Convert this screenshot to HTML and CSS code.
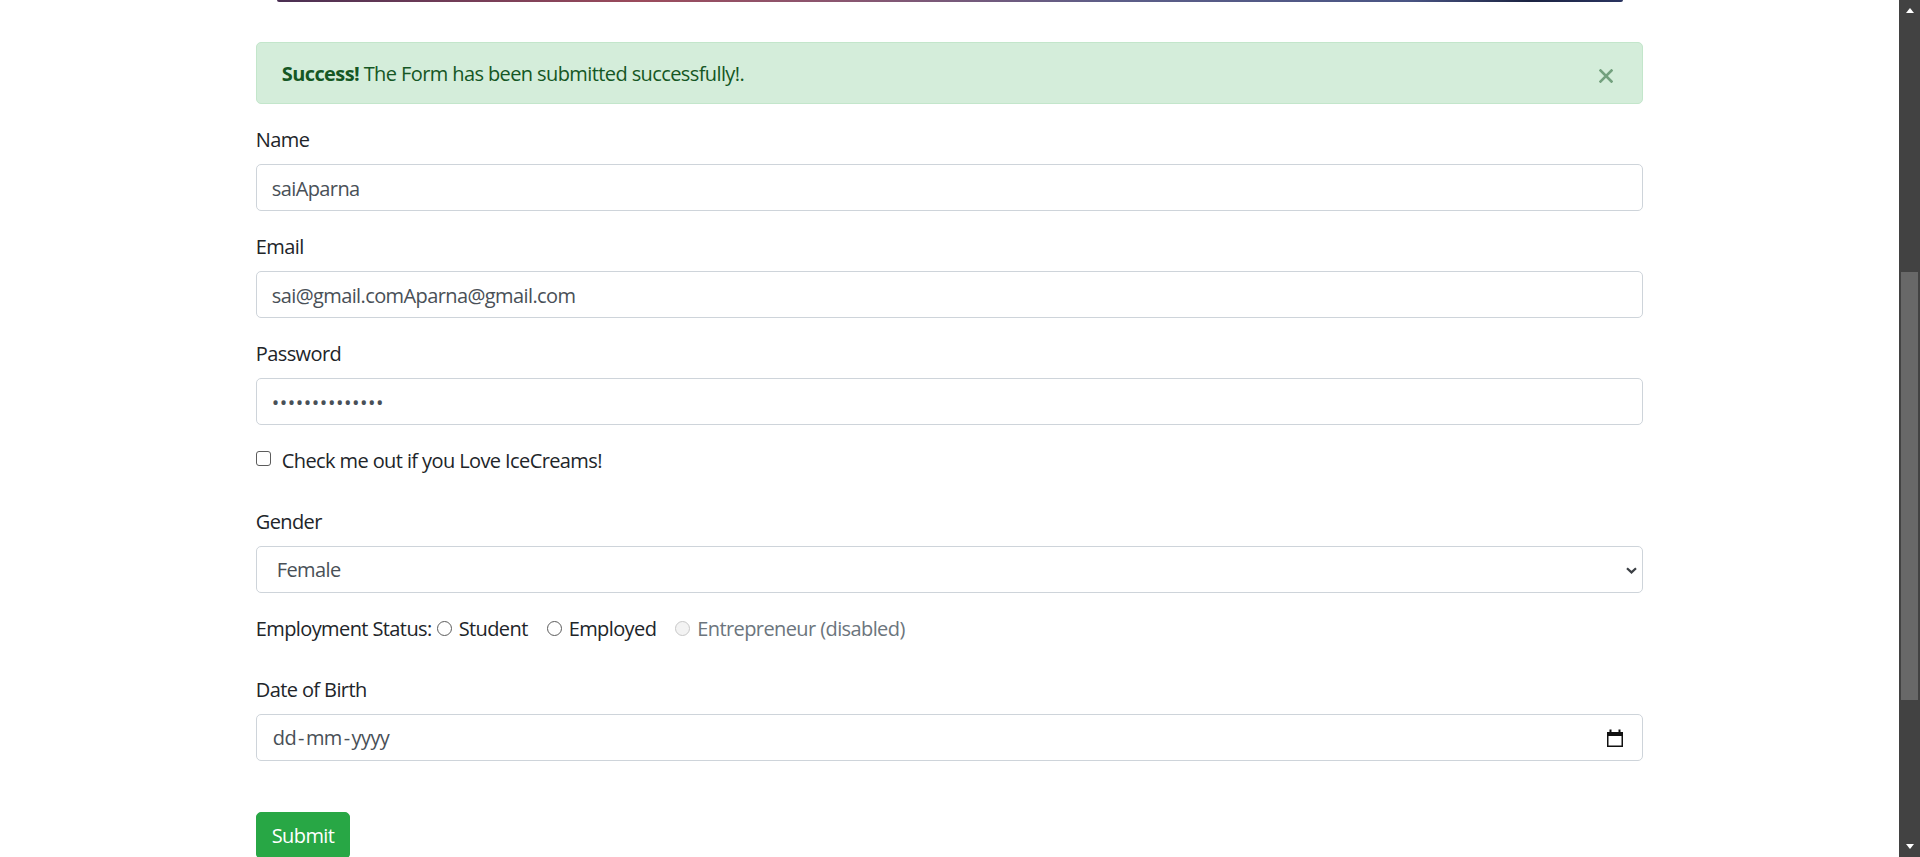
FILE: index.html
```html
<!DOCTYPE html>
<html lang="en">
<head>
<meta charset="utf-8">
<title>Form</title>
<link rel="stylesheet" href="styles.css">
</head>
<body>
<div class="page">
  <main class="main">
    <div class="container">
      <div class="banner"></div>
      <div class="alert">
        <span class="alert-text"><strong>Success!</strong> The Form has been submitted successfully!.</span>
        <svg class="close" width="14" height="14" viewBox="0 0 14 14"><path d="M1.5 1.5 L12.5 12.5 M12.5 1.5 L1.5 12.5" stroke="#155724" stroke-width="2.6" stroke-linecap="square"/></svg>
      </div>
      <form class="form">
        <div class="form-group">
          <label class="label">Name</label>
          <input class="form-control" type="text" value="saiAparna">
        </div>
        <div class="form-group">
          <label class="label">Email</label>
          <input class="form-control" type="text" value="sai@gmail.comAparna@gmail.com">
        </div>
        <div class="form-group">
          <label class="label">Password</label>
          <input class="form-control password" type="password" value="abcdefghijklmn">
        </div>
        <div class="form-check"><span class="checkbox"></span><span>Check me out if you Love IceCreams!</span></div>
        <div class="form-group">
          <label class="label">Gender</label>
          <div class="form-control select"><span>Female</span><svg width="11" height="7" viewBox="0 0 11 7"><path d="M1 1.2 L5.5 5.4 L10 1.2" fill="none" stroke="#3b3f44" stroke-width="2.2"/></svg></div>
        </div>
        <div class="radio-row"><span>Employment Status:</span><span class="radio"></span><span class="opt">Student</span><span class="radio"></span><span class="opt">Employed</span><span class="radio disabled"></span><span class="muted">Entrepreneur (disabled)</span></div>
        <div class="form-group dob">
          <label class="label">Date of Birth</label>
          <div class="form-control date"><span>dd<span class="sep">-</span>mm<span class="sep">-</span>yyyy</span><svg width="16" height="18" viewBox="0 0 16 18"><rect x="0.75" y="3.75" width="14.5" height="13.5" fill="none" stroke="#111" stroke-width="1.5"/><rect x="0" y="3" width="16" height="4" fill="#111"/><rect x="2.5" y="0.5" width="2" height="3" fill="#111"/><rect x="11.5" y="0.5" width="2" height="3" fill="#111"/></svg></div>
        </div>
        <button class="btn" type="button">Submit</button>
      </form>
    </div>
  </main>
  <aside class="scrollbar">
    <div class="sb-btn"><span class="tri-up"></span></div>
    <div class="sb-track"><div class="sb-thumb"></div></div>
    <div class="sb-btn"><span class="tri-down"></span></div>
  </aside>
</div>
</body>
</html>
```
FILE: styles.css
```css
* { box-sizing: border-box; }
html, body { margin: 0; height: 100%; overflow: hidden; }
body {
  font-family: "Open Sans", "Noto Sans", "DejaVu Sans", sans-serif;
  font-size: 20px;
  line-height: 1.5;
  letter-spacing: -0.6px;
  color: #212529;
  background: #fff;
}
.page { display: flex; height: 857px; }
.main { flex: 1; overflow: hidden; }
.container { width: 1425px; margin: 0 auto; padding: 0 18.75px; }

.banner {
  height: 2px;
  margin: 0 20px 40px 21px;
  border-radius: 0 0 4px 4px;
  background: linear-gradient(90deg, #4a2f52 0%, #7a3f58 16%, #9b4b5c 27%, #8a5670 42%, #5d5e88 62%, #4a5584 84%, #1b2342 93%, #2a3460 100%);
}

.alert {
  display: flex;
  align-items: center;
  justify-content: space-between;
  padding: 15px 29px 15px 25px;
  background: #d4edda;
  border: 1px solid #c3e6cb;
  border-radius: 5px;
  color: #155724;
  margin-bottom: 20px;
}
.alert-text { position: relative; top: 1px; }
.alert strong { font-weight: 700; }
.close { opacity: .5; margin-top: 5px; flex: none; }

.form-group { margin-bottom: 20px; }
.label { display: block; margin-bottom: 10px; padding-top: 1px; height: 30px; }
.form-control {
  display: block;
  width: 100%;
  height: 47px;
  padding: 8px 15px 7px;
  font: inherit;
  letter-spacing: inherit;
  color: #495057;
  background: #fff;
  border: 1px solid #ced4da;
  border-radius: 5px;
  outline: none;
}
.password { letter-spacing: 0.5px; }

.form-check { margin-bottom: 31px; padding-top: 1px; height: 30px; }
.checkbox {
  display: inline-block;
  width: 15px;
  height: 15px;
  border: 1.4px solid #5c5c5c;
  border-radius: 3px;
  margin: 0 11px 2px 0;
  vertical-align: baseline;
}

.select {
  display: flex;
  align-items: center;
  justify-content: space-between;
  padding-left: 20px;
  padding-right: 5px;
}

.radio-row { margin-bottom: 31px; padding-top: 1px; height: 30px; }
.radio {
  display: inline-block;
  width: 15px;
  height: 15px;
  border: 1.4px solid #5c5c5c;
  border-radius: 50%;
  margin: 0 7px 0 5px;
  vertical-align: baseline;
}
.radio.disabled { border-color: #c8c8c8; background: #f3f3f3; }
.opt { margin-right: 14px; }
.muted { color: #6c757d; }

.dob { margin-bottom: 51px; }
.date {
  display: flex;
  align-items: center;
  justify-content: space-between;
  padding-left: 16px;
  padding-right: 19px;
}
.sep { margin: 0 2px; }

.btn {
  display: inline-block;
  padding: 8px 15px 7px;
  font: inherit;
  letter-spacing: inherit;
  line-height: 1.5;
  color: #fff;
  background: #28a745;
  border: 1px solid #28a745;
  border-radius: 5px;
}

.scrollbar {
  width: 21px;
  flex: none;
  background: #424242;
  display: flex;
  flex-direction: column;
}
.sb-btn { height: 21px; display: flex; align-items: center; justify-content: center; }
.tri-up { width: 0; height: 0; border-left: 4.5px solid transparent; border-right: 4.5px solid transparent; border-bottom: 5px solid #fff; }
.tri-down { width: 0; height: 0; border-left: 4.5px solid transparent; border-right: 4.5px solid transparent; border-top: 5px solid #fff; }
.sb-track { flex: 1; padding: 251px 2px 0 2px; }
.sb-thumb { height: 428px; background: #686868; }
```
